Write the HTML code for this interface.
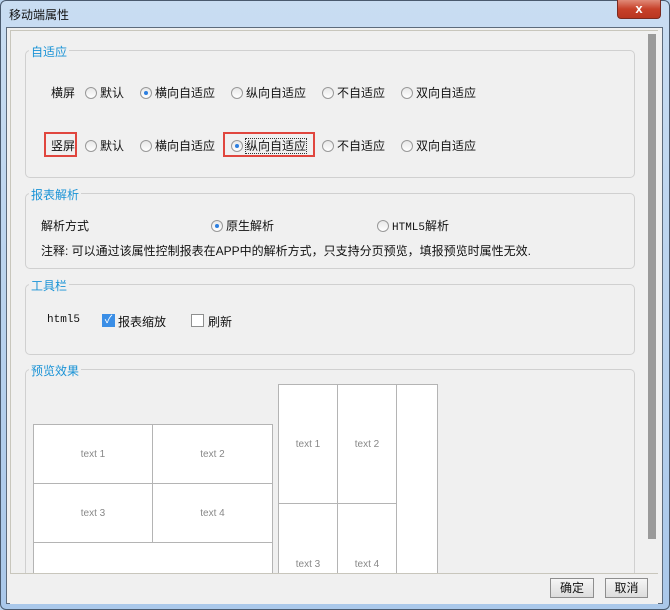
<!DOCTYPE html>
<html><head><meta charset="utf-8"><style>
*{margin:0;padding:0;box-sizing:border-box}
body{width:670px;height:610px;position:relative;overflow:hidden;background:#b9d3ee;font-family:"Liberation Sans","Noto Sans CJK SC",sans-serif;font-size:12px;color:#111}
.a{position:absolute}
.frame{left:0;top:0;width:670px;height:610px;background:linear-gradient(#c9ddf2,#aac8ea);border:1px solid #4a5a6e;border-radius:6px}
.body{left:6px;top:27px;width:657px;height:577px;background:#f0f0f0;border:1px solid #5d6b7c}
.inner{left:10px;top:30px;width:648px;height:544px;border:1px solid #c8c6bc;border-right:none}
.grp{border:1px solid #d0d0d0;border-radius:5px}
.lg{color:#1a93d6;background:#f0f0f0;padding:0 2px;font-size:12px}
.r{display:inline-block;width:12px;height:12px;border-radius:50%;border:1px solid #999;background:linear-gradient(#e8e8e8,#fff);vertical-align:-2px;margin-right:3px;position:relative}
.r.on::after{content:"";position:absolute;left:3px;top:3px;width:4px;height:4px;border-radius:50%;background:#2c7fe0}
.row span.t{position:absolute}
.cell{background:#fff;border:1px solid #b4b4b4;color:#888;font-size:10px;display:flex;align-items:center;justify-content:center}
.btn{border:1px solid #8e8e8e;background:linear-gradient(#f6f6f6,#dcdcdc);text-align:center;line-height:18px;font-size:12px}
</style></head><body>
<div class="a frame"></div>
<div class="a" style="left:9px;top:6px;font-size:12px">移动端属性</div>
<div class="a" style="left:617px;top:0;width:44px;height:19px;background:linear-gradient(#e08a78,#c7412a 50%,#b93620);border:1px solid #7a2a20;border-top:none;border-radius:0 0 4px 4px;color:#fff;font-weight:bold;text-align:center;line-height:17px;font-size:13px">x</div>
<div class="a body"></div>
<div class="a inner"></div>
<div class="a" style="left:648px;top:34px;width:8px;height:505px;background:#9a9a9a"></div>

<div class="a grp" style="left:25px;top:50px;width:610px;height:128px"></div>
<div class="a lg" style="left:29px;top:43px">自适应</div>
<div class="a" style="left:51px;top:84px">横屏</div>
<div class="a" style="left:85px;top:84px"><span class="r"></span>默认</div>
<div class="a" style="left:140px;top:84px"><span class="r on"></span>横向自适应</div>
<div class="a" style="left:231px;top:84px"><span class="r"></span>纵向自适应</div>
<div class="a" style="left:322px;top:84px"><span class="r"></span>不自适应</div>
<div class="a" style="left:401px;top:84px"><span class="r"></span>双向自适应</div>
<div class="a" style="left:44px;top:132px;width:33px;height:25px;border:2px solid #e0463e"></div>
<div class="a" style="left:51px;top:137px">竖屏</div>
<div class="a" style="left:85px;top:137px"><span class="r"></span>默认</div>
<div class="a" style="left:140px;top:137px"><span class="r"></span>横向自适应</div>
<div class="a" style="left:223px;top:132px;width:92px;height:25px;border:2px solid #e0463e"></div>
<div class="a" style="left:231px;top:137px"><span class="r on"></span><span style="outline:1px dotted #333">纵向自适应</span></div>
<div class="a" style="left:322px;top:137px"><span class="r"></span>不自适应</div>
<div class="a" style="left:401px;top:137px"><span class="r"></span>双向自适应</div>

<div class="a grp" style="left:25px;top:193px;width:610px;height:76px"></div>
<div class="a lg" style="left:29px;top:186px">报表解析</div>
<div class="a" style="left:41px;top:217px">解析方式</div>
<div class="a" style="left:211px;top:217px"><span class="r on"></span>原生解析</div>
<div class="a" style="left:377px;top:217px"><span class="r"></span><span style="font-family:'Liberation Mono',monospace;font-size:11px">HTML5</span>解析</div>
<div class="a" style="left:41px;top:242px">注释: 可以通过该属性控制报表在APP中的解析方式，只支持分页预览，填报预览时属性无效.</div>

<div class="a grp" style="left:25px;top:284px;width:610px;height:71px"></div>
<div class="a lg" style="left:29px;top:277px">工具栏</div>
<div class="a" style="left:47px;top:314px;font-family:'Liberation Mono',monospace;font-size:11px">html5</div>
<div class="a" style="left:102px;top:314px;width:13px;height:13px;background:#3a8ee6;color:#fff;font-size:11px;line-height:13px;text-align:center">✓</div>
<div class="a" style="left:118px;top:313px">报表缩放</div>
<div class="a" style="left:191px;top:314px;width:13px;height:13px;border:1px solid #8e8f8f;background:#fff"></div>
<div class="a" style="left:208px;top:313px">刷新</div>

<div class="a grp" style="left:25px;top:369px;width:610px;height:230px;border-bottom:none"></div>
<div class="a lg" style="left:29px;top:362px">预览效果</div>
<div class="a" style="left:33px;top:424px;width:240px;height:150px;background:#fff;border:1px solid #b4b4b4"></div>
<div class="a cell" style="left:33px;top:424px;width:120px;height:60px">text 1</div>
<div class="a cell" style="left:152px;top:424px;width:121px;height:60px">text 2</div>
<div class="a cell" style="left:33px;top:483px;width:120px;height:60px">text 3</div>
<div class="a cell" style="left:152px;top:483px;width:121px;height:60px">text 4</div>
<div class="a" style="left:278px;top:384px;width:160px;height:190px;background:#fff;border:1px solid #b4b4b4"></div>
<div class="a cell" style="left:278px;top:384px;width:60px;height:120px">text 1</div>
<div class="a cell" style="left:337px;top:384px;width:60px;height:120px">text 2</div>
<div class="a cell" style="left:278px;top:503px;width:60px;height:71px;align-items:flex-end;padding-bottom:3px">text 3</div>
<div class="a cell" style="left:337px;top:503px;width:60px;height:71px;align-items:flex-end;padding-bottom:3px">text 4</div>
<div class="a" style="left:10px;top:573px;width:648px;height:31px;background:#f0f0f0;border-top:1px solid #c8c6bc"></div>
<div class="a btn" style="left:550px;top:578px;width:44px;height:20px">确定</div>
<div class="a btn" style="left:605px;top:578px;width:43px;height:20px">取消</div>
</body></html>
